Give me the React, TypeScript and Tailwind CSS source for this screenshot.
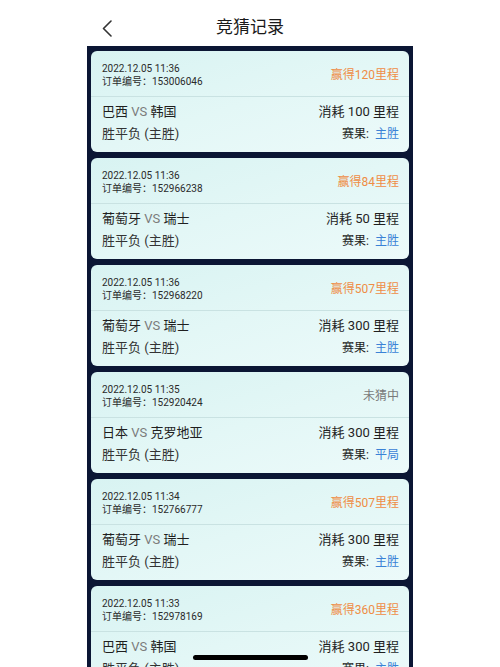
import React from 'react';

type Record = {
    time: string;
    order: string;
    result: string;
    won: boolean;
    home: string;
    away: string;
    cost: number;
    outcome: string;
};

const records: Record[] = [
    { time: '2022.12.05 11:36', order: '153006046', result: '赢得120里程', won: true, home: '巴西', away: '韩国', cost: 100, outcome: '主胜' },
    { time: '2022.12.05 11:36', order: '152966238', result: '赢得84里程', won: true, home: '葡萄牙', away: '瑞士', cost: 50, outcome: '主胜' },
    { time: '2022.12.05 11:36', order: '152968220', result: '赢得507里程', won: true, home: '葡萄牙', away: '瑞士', cost: 300, outcome: '主胜' },
    { time: '2022.12.05 11:35', order: '152920424', result: '未猜中', won: false, home: '日本', away: '克罗地亚', cost: 300, outcome: '平局' },
    { time: '2022.12.05 11:34', order: '152766777', result: '赢得507里程', won: true, home: '葡萄牙', away: '瑞士', cost: 300, outcome: '主胜' },
    { time: '2022.12.05 11:33', order: '152978169', result: '赢得360里程', won: true, home: '巴西', away: '韩国', cost: 300, outcome: '主胜' },
];

function RecordCard({ r }: { r: Record }) {
    return (
        <div className="shrink-0 rounded-[6px] bg-gradient-to-br from-[#d8f3f2] via-[#e3f7f6] to-[#ecfafa] overflow-hidden">
            <div className="h-[46px] px-[11px] pr-[10px] pt-[3px] flex items-center justify-between border-b border-[#c9e2e2]">
                <div className="text-[10px] leading-[13px] text-[#2a2a2a]">
                    <p>{r.time}</p>
                    <p>订单编号：{r.order}</p>
                </div>
                <span className={`text-[12px] ${r.won ? 'text-[#ef8d45]' : 'text-[#7a7a7a]'}`}>
                    {r.result}
                </span>
            </div>
            <div className="px-[11px] pr-[10px] pt-[4px] pb-[7px] text-[13px] leading-[22px] text-[#1f1f1f]">
                <div className="flex items-center justify-between">
                    <span>
                        {r.home}&nbsp;<span className="text-[#7b7b7b]">VS</span>&nbsp;{r.away}
                    </span>
                    <span>消耗&nbsp;{r.cost}&nbsp;里程</span>
                </div>
                <div className="flex items-center justify-between">
                    <span className="text-[#333]">胜平负 (主胜)</span>
                    <span className="text-[12px]">
                        赛果:&nbsp;&nbsp;<span className="text-[#3a82d6]">{r.outcome}</span>
                    </span>
                </div>
            </div>
        </div>
    );
}

export default function App() {
    return (
        <div className="relative h-[667px] w-[500px] overflow-hidden bg-white font-['Roboto','Noto_Sans_CJK_SC',sans-serif]">
            <div className="relative h-[46px] flex items-center justify-center">
                <svg
                    className="absolute left-[101px] top-[20px]"
                    width="12"
                    height="17"
                    viewBox="0 0 12 17"
                    fill="none"
                    stroke="#333"
                    strokeWidth="1.6"
                    strokeLinecap="round"
                    strokeLinejoin="round"
                >
                    <path d="M10 1 L2.5 8.5 L10 16" />
                </svg>
                <h1 className="text-[17px] text-[#1a1a1a] pt-[10px]">竞猜记录</h1>
            </div>
            <div className="mx-[87px] h-[621px] bg-[#0b1634] px-[4px] pt-[5px] flex flex-col gap-[6px] overflow-hidden">
                {records.map((r, i) => (
                    <RecordCard key={i} r={r} />
                ))}
            </div>
            <div className="absolute left-[193px] top-[655px] h-[5px] w-[115px] rounded-full bg-black" />
        </div>
    );
}
